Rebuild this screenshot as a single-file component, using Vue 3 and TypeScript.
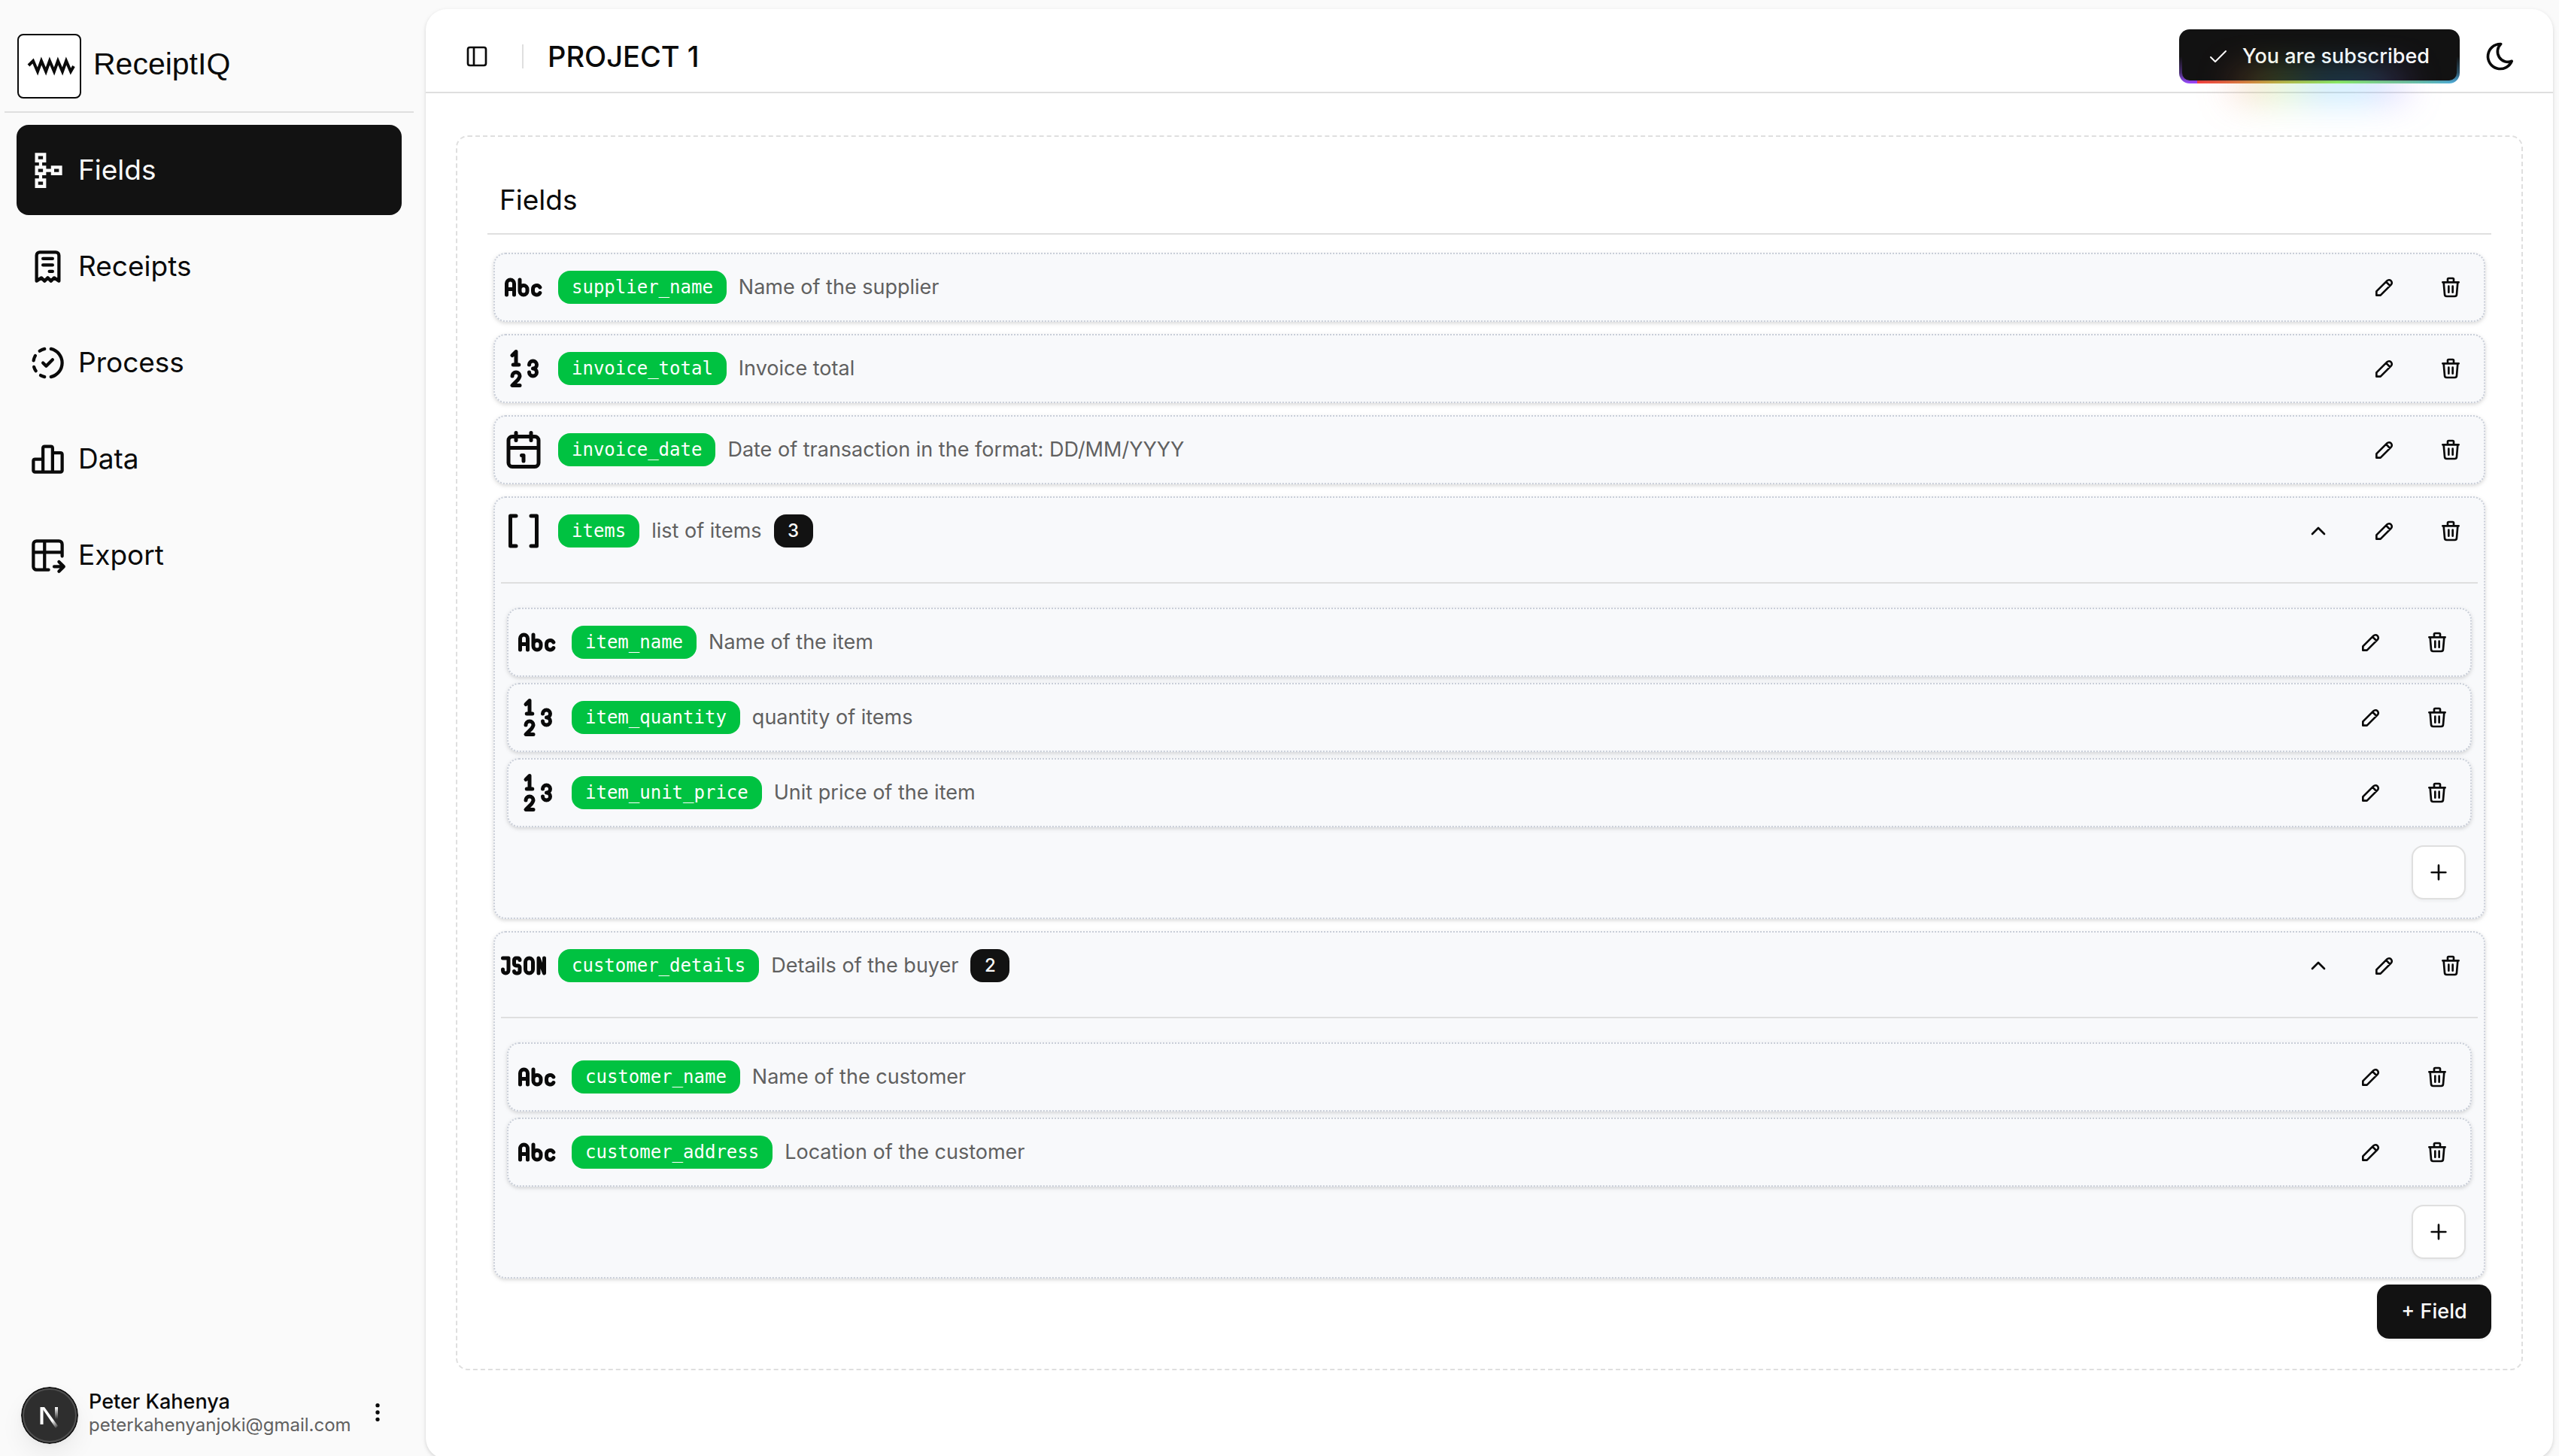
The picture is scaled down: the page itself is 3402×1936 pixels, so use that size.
<script setup lang="ts">
import { h, ref } from 'vue'
import type { FunctionalComponent } from 'vue'

type IconName =
  | 'schema' | 'receipt' | 'progress' | 'chart' | 'export'
  | 'string' | 'number' | 'date' | 'list' | 'object'
  | 'pencil' | 'trash' | 'chevron' | 'plus' | 'dots'
  | 'panel' | 'check' | 'moon'

const icons: Record<IconName, string> = {
  schema: 'M14 9v2h-3V9H8.5V7H11V1H4v6h2.5v2H4v6h2.5v2H4v6h7v-6H8.5v-2H11v-2h3v2h7V9h-7zM6 3h3v2H6V3zm3 18H6v-2h3v2zm0-8H6v-2h3v2zm10 0h-3v-2h3v2z',
  receipt: 'M5 21v-16a2 2 0 0 1 2 -2h10a2 2 0 0 1 2 2v16l-3 -2l-2 2l-2 -2l-2 2l-2 -2l-3 2m4 -14h6m-6 4h6m-2 4h2',
  progress: 'M10 20.777a8.942 8.942 0 0 1 -2.48 -.969M14 3.223a9.003 9.003 0 0 1 0 17.554M4.579 17.093a8.961 8.961 0 0 1 -1.227 -2.592M3.124 10.5c.16 -.95 .468 -1.85 .9 -2.675l.169 -.305M6.907 4.579a8.954 8.954 0 0 1 3.093 -1.356M9 12l2 2l4 -4',
  chart: 'M3 13a1 1 0 0 1 1 -1h4a1 1 0 0 1 1 1v6a1 1 0 0 1 -1 1h-4a1 1 0 0 1 -1 -1zM15 9a1 1 0 0 1 1 -1h4a1 1 0 0 1 1 1v10a1 1 0 0 1 -1 1h-4a1 1 0 0 1 -1 -1zM9 5a1 1 0 0 1 1 -1h4a1 1 0 0 1 1 1v14a1 1 0 0 1 -1 1h-4a1 1 0 0 1 -1 -1zM4 20h14',
  export: 'M12.5 21h-7.5a2 2 0 0 1 -2 -2v-14a2 2 0 0 1 2 -2h14a2 2 0 0 1 2 2v7.5M3 10h18M10 3v18M16 19h6M19 16l3 3l-3 3',
  string: 'M3 16v-6a2 2 0 1 1 4 0v6M3 13h4M10 8v6a2 2 0 1 0 4 0v-1a2 2 0 1 0 -4 0v1M20.732 12a2 2 0 0 0 -3.732 1v1a2 2 0 0 0 3.726 1.01',
  number: 'M8 10v-7l-2 2M6 16a2 2 0 1 1 4 0c0 .591 -.601 1.46 -1 2l-3 3h4M15 14a2 2 0 1 0 2 -2a2 2 0 1 0 -2 -2M6.5 10h3',
  date: 'M4 7a2 2 0 0 1 2 -2h12a2 2 0 0 1 2 2v12a2 2 0 0 1 -2 2h-12a2 2 0 0 1 -2 -2v-12zM16 3v4M8 3v4M4 11h16M11 15h1M12 15v3',
  list: 'M8 4h-3v16h3M16 4h3v16h-3',
  object: 'M20 16v-8l3 8v-8M15 8a2 2 0 0 1 2 2v4a2 2 0 1 1 -4 0v-4a2 2 0 0 1 2 -2zM1 8h3v6.5a1.5 1.5 0 0 1 -3 0v-.5M7 15a1 1 0 0 0 1 1h1a1 1 0 0 0 1 -1v-2a1 1 0 0 0 -1 -1h-1a1 1 0 0 1 -1 -1v-2a1 1 0 0 1 1 -1h1a1 1 0 0 1 1 1',
  pencil: 'M4 20h4l10.5 -10.5a2.828 2.828 0 1 0 -4 -4l-10.5 10.5v4M13.5 6.5l4 4',
  trash: 'M4 7h16M10 11v6M14 11v6M5 7l1 12a2 2 0 0 0 2 2h8a2 2 0 0 0 2 -2l1 -12M9 7v-3a1 1 0 0 1 1 -1h4a1 1 0 0 1 1 1v3',
  chevron: 'M6 15l6 -6l6 6',
  plus: 'M12 5v14M5 12h14',
  dots: 'M12 4a1 1 0 1 0 0 2a1 1 0 1 0 0 -2zM12 11a1 1 0 1 0 0 2a1 1 0 1 0 0 -2zM12 18a1 1 0 1 0 0 2a1 1 0 1 0 0 -2z',
  panel: 'M5 3h14a2 2 0 0 1 2 2v14a2 2 0 0 1 -2 2h-14a2 2 0 0 1 -2 -2v-14a2 2 0 0 1 2 -2zM9 3v18',
  check: 'M2 13l6 6L22 5',
  moon: 'M12 3c.132 0 .263 0 .393 0a7.5 7.5 0 0 0 7.92 12.446a9 9 0 1 1 -8.313 -12.454z',
}

const Icon: FunctionalComponent<{ name: IconName; size: number }> = (props) =>
  h(
    'svg',
    {
      viewBox: '0 0 24 24',
      width: props.size,
      height: props.size,
      fill: props.name === 'schema' ? 'currentColor' : 'none',
      stroke: props.name === 'schema' ? 'none' : 'currentColor',
      'stroke-width': 2,
      'stroke-linecap': 'round',
      'stroke-linejoin': 'round',
      'aria-hidden': 'true',
    },
    [h('path', { d: icons[props.name], 'fill-rule': 'evenodd' })],
  )
Icon.props = ['name', 'size']

interface Field {
  type: 'string' | 'number' | 'date' | 'list' | 'object'
  name: string
  description: string
  children?: Field[]
}

const nav: { label: string; icon: IconName }[] = [
  { label: 'Fields', icon: 'schema' },
  { label: 'Receipts', icon: 'receipt' },
  { label: 'Process', icon: 'progress' },
  { label: 'Data', icon: 'chart' },
  { label: 'Export', icon: 'export' },
]
const active = ref('Fields')

const fields: Field[] = [
  { type: 'string', name: 'supplier_name', description: 'Name of the supplier' },
  { type: 'number', name: 'invoice_total', description: 'Invoice total' },
  { type: 'date', name: 'invoice_date', description: 'Date of transaction in the format: DD/MM/YYYY' },
  {
    type: 'list',
    name: 'items',
    description: 'list of items',
    children: [
      { type: 'string', name: 'item_name', description: 'Name of the item' },
      { type: 'number', name: 'item_quantity', description: 'quantity of items' },
      { type: 'number', name: 'item_unit_price', description: 'Unit price of the item' },
    ],
  },
  {
    type: 'object',
    name: 'customer_details',
    description: 'Details of the buyer',
    children: [
      { type: 'string', name: 'customer_name', description: 'Name of the customer' },
      { type: 'string', name: 'customer_address', description: 'Location of the customer' },
    ],
  },
]

const collapsed = ref<Record<string, boolean>>({})
function toggle(name: string) {
  collapsed.value[name] = !collapsed.value[name]
}
</script>

<template>
  <div class="shell">
    <aside class="sidebar">
      <div class="brand">
        <svg class="logo" viewBox="0 0 86 86" aria-hidden="true">
          <rect x="2" y="1" width="83" height="84" rx="7" fill="#fff" stroke="#0a0a0a" stroke-width="2" />
          <path
            d="M16 42l6 -6l6 14l5 -14l6 14l5 -14l6 14l5 -14l6 14l5 -14l6 14l4 -7"
            fill="none"
            stroke="#0a0a0a"
            stroke-width="4"
          />
        </svg>
        <span class="brand-name">ReceiptIQ</span>
      </div>
      <nav class="nav">
        <a
          v-for="item in nav"
          :key="item.label"
          href="#"
          class="nav-item"
          :class="{ active: active === item.label }"
          @click.prevent="active = item.label"
        >
          <Icon :name="item.icon" :size="51" />
          <span>{{ item.label }}</span>
        </a>
      </nav>
      <div class="user">
        <svg class="avatar" viewBox="0 0 76 76" aria-hidden="true">
          <defs>
            <linearGradient id="diagonal" x1="30" y1="30" x2="50" y2="54" gradientUnits="userSpaceOnUse">
              <stop offset="0.6" stop-color="#fff" />
              <stop offset="1" stop-color="#fff" stop-opacity="0" />
            </linearGradient>
            <linearGradient id="stem" x1="47" y1="27" x2="47" y2="43" gradientUnits="userSpaceOnUse">
              <stop offset="0" stop-color="#fff" />
              <stop offset="1" stop-color="#fff" stop-opacity="0" />
            </linearGradient>
          </defs>
          <circle cx="38" cy="38" r="37" fill="#2e2e2e" stroke="#121212" stroke-width="2" />
          <circle cx="38" cy="38" r="35" fill="none" stroke="#505050" stroke-width="2" />
          <path d="M27.500 50V27" fill="none" stroke="#fff" stroke-width="4" />
          <path d="M27 27h4l18 25l-3 3z" fill="url(#diagonal)" />
          <path d="M45 27h4v16h-4z" fill="url(#stem)" />
        </svg>
        <div class="user-text">
          <span class="user-name">Peter Kahenya</span>
          <span class="user-mail">peterkahenyanjoki@gmail.com</span>
        </div>
        <button class="user-menu" type="button" aria-label="Account menu">
          <Icon name="dots" :size="32" />
        </button>
      </div>
    </aside>

    <main class="page">
      <header class="topbar">
        <button class="icon-button" type="button" aria-label="Toggle sidebar">
          <Icon name="panel" :size="32" />
        </button>
        <span class="separator"></span>
        <h1 class="title">PROJECT 1</h1>
        <button class="subscribed" type="button">
          <Icon name="check" :size="24" />
          <span>You are subscribed</span>
        </button>
        <button class="icon-button theme" type="button" aria-label="Toggle theme">
          <Icon name="moon" :size="44" />
        </button>
      </header>

      <section class="panel">
        <h2 class="panel-title">Fields</h2>
        <div class="cards">
          <article v-for="field in fields" :key="field.name" class="card">
            <div class="row">
              <Icon :name="field.type" :size="60" />
              <code class="badge">{{ field.name }}</code>
              <span class="description">{{ field.description }}</span>
              <span v-if="field.children" class="count">{{ field.children.length }}</span>
              <div class="actions">
                <button
                  v-if="field.children"
                  class="icon-button"
                  type="button"
                  :aria-label="`Toggle ${field.name}`"
                  @click="toggle(field.name)"
                >
                  <Icon name="chevron" :size="32" />
                </button>
                <button class="icon-button" type="button" :aria-label="`Edit ${field.name}`">
                  <Icon name="pencil" :size="32" />
                </button>
                <button class="icon-button" type="button" :aria-label="`Delete ${field.name}`">
                  <Icon name="trash" :size="32" />
                </button>
              </div>
            </div>
            <div v-if="field.children && !collapsed[field.name]" class="nested">
              <article v-for="child in field.children" :key="child.name" class="card">
                <div class="row">
                  <Icon :name="child.type" :size="60" />
                  <code class="badge">{{ child.name }}</code>
                  <span class="description">{{ child.description }}</span>
                  <div class="actions">
                    <button class="icon-button" type="button" :aria-label="`Edit ${child.name}`">
                      <Icon name="pencil" :size="32" />
                    </button>
                    <button class="icon-button" type="button" :aria-label="`Delete ${child.name}`">
                      <Icon name="trash" :size="32" />
                    </button>
                  </div>
                </div>
              </article>
              <button class="add-child" type="button" :aria-label="`Add field to ${field.name}`">
                <Icon name="plus" :size="32" />
              </button>
            </div>
          </article>
        </div>
        <button class="add-field" type="button">+ Field</button>
      </section>
    </main>
  </div>
</template>

<style>
body {
  margin: 0;
  background: #fafafa;
}
</style>

<style scoped>
.shell {
  display: flex;
  height: 100vh;
  overflow: hidden;
  background: #fafafa;
  color: #0a0a0a;
  font-family: "Inter", "Liberation Sans", sans-serif;
  font-size: 27px;
  line-height: 40px;
}

.shell * {
  box-sizing: border-box;
}

svg {
  display: block;
  flex: none;
}

button {
  margin: 0;
  padding: 0;
  border: 0;
  background: none;
  color: inherit;
  font: inherit;
}

/* Sidebar */
.sidebar {
  display: flex;
  flex: none;
  flex-direction: column;
  width: 566px;
  padding: 0 16px 16px 6px;
}

.brand {
  display: flex;
  align-items: center;
  gap: 16px;
  padding: 45px 16px 17px;
  border-bottom: 2px solid #dfdfdf;
}

.logo {
  width: 86px;
  height: 86px;
}

.brand-name {
  padding-bottom: 6px;
  font-family: "Liberation Sans", Arial, sans-serif;
  font-size: 41px;
  line-height: 48px;
}

.nav {
  display: flex;
  flex-direction: column;
  gap: 8px;
  padding: 16px;
}

.nav-item {
  display: flex;
  align-items: center;
  gap: 15px;
  height: 120px;
  padding: 0 16px;
  border-radius: 16px;
  color: #0a0a0a;
  font-size: 37px;
  line-height: 48px;
  text-decoration: none;
}

.nav-item.active {
  background: #121212;
  color: #fafafa;
}

.user {
  display: flex;
  align-items: center;
  gap: 14px;
  margin-top: auto;
  padding: 0 32px 0 22px;
}

.avatar {
  width: 76px;
  height: 76px;
  margin-top: 8px;
  border-radius: 50%;
  box-shadow: 0 16px 32px rgba(0, 0, 0, 0.06), 0 2px 8px rgba(0, 0, 0, 0.04);
}

.user-text {
  display: flex;
  flex-direction: column;
}

.user-name {
  font-weight: 500;
  line-height: 34px;
}

.user-mail {
  color: #606060;
  font-size: 24px;
  line-height: 28px;
}

.user-menu {
  margin-left: auto;
}

/* Page */
.page {
  flex: 1;
  min-width: 0;
  height: calc(100vh - 8px);
  margin: 12px 8px 0 0;
  border-radius: 28px;
  background: #fff;
  box-shadow: 0 2px 6px rgba(0, 0, 0, 0.1), 0 2px 4px rgba(0, 0, 0, 0.06);
}

.topbar {
  display: flex;
  align-items: center;
  height: 112px;
  padding: 27px 32px 11px;
  border-bottom: 2px solid #dfdfdf;
}

.icon-button {
  display: flex;
  align-items: center;
  justify-content: center;
  width: 72px;
  height: 72px;
}

.separator {
  width: 2px;
  height: 32px;
  margin: 0 32px 0 24px;
  background: #dfdfdf;
}

.title {
  margin: 0;
  font-size: 38px;
  font-weight: 500;
  line-height: 48px;
}

.subscribed {
  position: relative;
  display: flex;
  align-items: center;
  justify-content: center;
  gap: 20px;
  width: 373px;
  height: 72px;
  margin-left: auto;
  border: 4px solid transparent;
  border-radius: 14px;
  background:
    linear-gradient(#121212, #121212) padding-box,
    linear-gradient(#121212 50%, rgba(18, 18, 18, 0.6) 80%, rgba(18, 18, 18, 0)) border-box,
    linear-gradient(90deg, #ff4242, #a1ff42, #42a1ff, #42d0ff, #a142ff) 24px 0 / 200% border-box;
  color: #fafafa;
  font-weight: 500;
}

.subscribed::before {
  content: "";
  position: absolute;
  bottom: -20%;
  left: 20%;
  width: 60%;
  height: 20%;
  background: linear-gradient(90deg, #ff4242, #a1ff42, #42a1ff, #42d0ff, #a142ff);
  filter: blur(26px);
}

.theme {
  width: 76px;
  margin-left: 16px;
}

/* Field panel */
.panel {
  display: flex;
  flex-direction: column;
  margin: 56px 40px 0;
  padding: 40px;
  border: 2px dashed #dfdfdf;
  border-radius: 16px;
}

.panel-title {
  margin: 0;
  padding: 20px 16px;
  border-bottom: 2px solid #dfdfdf;
  font-size: 37px;
  font-weight: 400;
  line-height: 48px;
}

.cards {
  display: flex;
  flex-direction: column;
  gap: 16px;
  padding: 24px 8px 8px;
}

.card {
  padding: 8px;
  border: 2px dotted #c9ced8;
  border-radius: 16px;
  background: #f8f9fb;
  box-shadow: 0 2px 6px rgba(0, 0, 0, 0.1), 0 2px 4px rgba(0, 0, 0, 0.06);
}

.row {
  display: flex;
  align-items: center;
  gap: 16px;
  height: 72px;
}

.badge {
  padding: 0 18px;
  border-radius: 16px;
  background: #00c241;
  color: #fff;
  font-family: "DejaVu Sans Mono", monospace;
  font-size: 24px;
  line-height: 44px;
}

.description {
  color: #606060;
}

.count {
  width: 52px;
  border-radius: 16px;
  background: #121212;
  color: #fafafa;
  font-size: 24px;
  font-weight: 500;
  line-height: 44px;
  text-align: center;
}

.actions {
  display: flex;
  gap: 16px;
  margin-left: auto;
}

.nested {
  display: flex;
  flex-direction: column;
  gap: 8px;
  margin-top: 32px;
  padding: 32px 8px 16px;
  border-top: 2px solid #dfdfdf;
}

.add-child {
  display: flex;
  align-items: center;
  justify-content: center;
  align-self: flex-end;
  width: 72px;
  height: 72px;
  margin: 16px 8px 0 0;
  border: 2px solid #dfdfdf;
  border-radius: 16px;
  background: #fff;
  box-shadow: 0 2px 4px rgba(0, 0, 0, 0.05);
}

.add-field {
  align-self: flex-end;
  width: 152px;
  height: 72px;
  border-radius: 16px;
  background: #121212;
  color: #fafafa;
  font-weight: 500;
  box-shadow: 0 2px 4px rgba(0, 0, 0, 0.06);
}
</style>
